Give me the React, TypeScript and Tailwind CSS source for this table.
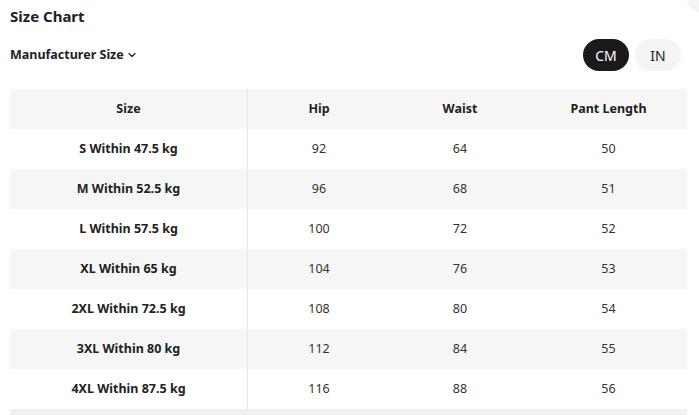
import { ChevronDown } from "lucide-react";

const rows = [
  { size: "S Within 47.5 kg", hip: 92, waist: 64, pant: 50 },
  { size: "M Within 52.5 kg", hip: 96, waist: 68, pant: 51 },
  { size: "L Within 57.5 kg", hip: 100, waist: 72, pant: 52 },
  { size: "XL Within 65 kg", hip: 104, waist: 76, pant: 53 },
  { size: "2XL Within 72.5 kg", hip: 108, waist: 80, pant: 54 },
  { size: "3XL Within 80 kg", hip: 112, waist: 84, pant: 55 },
  { size: "4XL Within 87.5 kg", hip: 116, waist: 88, pant: 56 },
];

export default function App() {
  return (
    <div className="relative h-[415px] w-[699px] overflow-hidden bg-white font-['Noto_Sans',sans-serif] text-[#222]">
      {/* close button peeking in the corner */}
      <div className="absolute -right-[14px] -top-[14px] h-[26px] w-[26px] rounded-full bg-[#f4f4f4]" />

      <h1 className="pl-[10px] pt-[5px] text-[15px] font-bold leading-[22px]">Size Chart</h1>

      {/* Toolbar */}
      <div className="mt-[12px] flex items-center justify-between pl-[10px] pr-[18px]">
        <button className="flex items-center gap-[2px] text-[12.5px] font-bold">
          Manufacturer Size
          <ChevronDown className="h-3 w-3" strokeWidth={2.5} />
        </button>
        <div className="flex gap-[6px]">
          <button className="h-[32px] w-[46px] rounded-full bg-[#1a1a1a] text-[14px] text-white">CM</button>
          <button className="h-[32px] w-[46px] rounded-full bg-[#f4f4f4] text-[14px] text-[#222]">IN</button>
        </div>
      </div>

      {/* Table */}
      <div className="ml-[10px] mt-[18px] w-[677px]">
        <div className="grid h-[40px] grid-cols-[238px_142px_140px_157px] items-center bg-[#f6f6f6] text-center text-[12.5px] font-bold">
          <div className="flex h-full items-center justify-center border-r border-[#e6e6e6]">Size</div>
          <div>Hip</div>
          <div>Waist</div>
          <div>Pant Length</div>
        </div>
        {rows.map((r, i) => (
          <div
            key={r.size}
            className={`grid h-[40px] grid-cols-[238px_142px_140px_157px] items-center text-center text-[12.5px] ${
              i % 2 === 1 ? "bg-[#f6f6f6]" : "bg-white"
            }`}
          >
            <div className="flex h-full items-center justify-center border-r border-[#e6e6e6] font-bold">{r.size}</div>
            <div className="text-[#333]">{r.hip}</div>
            <div className="text-[#333]">{r.waist}</div>
            <div className="text-[#333]">{r.pant}</div>
          </div>
        ))}
        {/* horizontal scroll track */}
        <div className="h-[6px] bg-[#f0f0f0]" />
      </div>
    </div>
  );
}
